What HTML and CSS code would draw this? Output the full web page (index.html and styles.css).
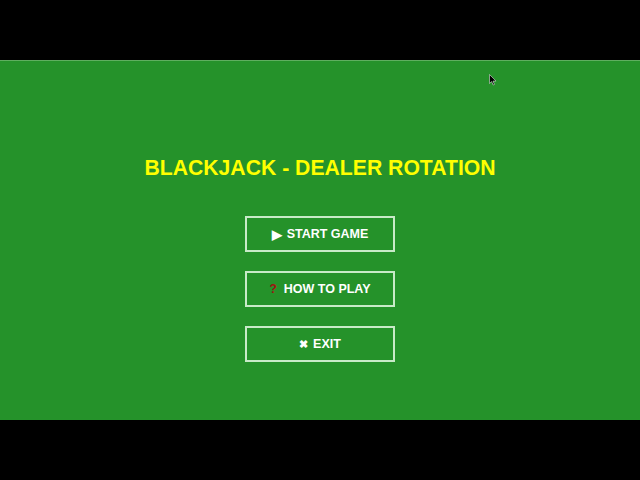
FILE: index.html
```html
<!DOCTYPE html>
<html>
<head>
<meta charset="utf-8">
<link rel="stylesheet" href="styles.css">
</head>
<body>
<div class="screen">
  <div class="table">
    <h1 class="title">BLACKJACK - DEALER ROTATION</h1>
    <div class="menu">
      <button class="btn"><span class="ico play">&#9654;</span>START GAME</button>
      <button class="btn"><span class="ico q">?</span>HOW TO PLAY</button>
      <button class="btn"><span class="ico x">&#10006;</span>EXIT</button>
    </div>
    <svg class="cursor" width="8" height="12" viewBox="0 0 8 12"><path d="M0.5 0.5 L0.5 9.5 L2.6 7.6 L4.2 11 L5.5 10.4 L4 7.1 L7 7.1 Z" fill="#000" stroke="#ddd" stroke-width="0.6"/></svg>
  </div>
</div>
</body>
</html>
```
FILE: styles.css
```css
html, body { margin: 0; padding: 0; background: #000; }
.screen { width: 640px; height: 480px; padding-top: 60px; box-sizing: border-box; }
.table {
  position: relative;
  height: 360px;
  background: #25922a;
  border-top: 1px solid #5fae5f;
  box-sizing: border-box;
  display: flex;
  flex-direction: column;
  align-items: center;
  font-family: "Liberation Sans", Arial, sans-serif;
}
.title {
  margin: 95px 0 0 0;
  font-size: 21.2px;
  line-height: 24px;
  font-weight: bold;
  color: #ffff00;
}
.menu { margin-top: 36px; display: flex; flex-direction: column; gap: 19px; }
.btn {
  width: 150px; height: 36px;
  background: transparent;
  border: 2px solid #c8eac8;
  color: #fff;
  font-family: "Liberation Sans", Arial, sans-serif;
  font-weight: bold;
  font-size: 12.5px;
  display: flex; align-items: center; justify-content: center;
  padding: 0;
}
.ico { margin-right: 5px; font-size: 11px; }
.play { font-size: 13px; }
.q { color: #a01010; font-size: 12px; margin-right: 7px; }
.cursor { position: absolute; left: 489px; top: 13px; }
```
